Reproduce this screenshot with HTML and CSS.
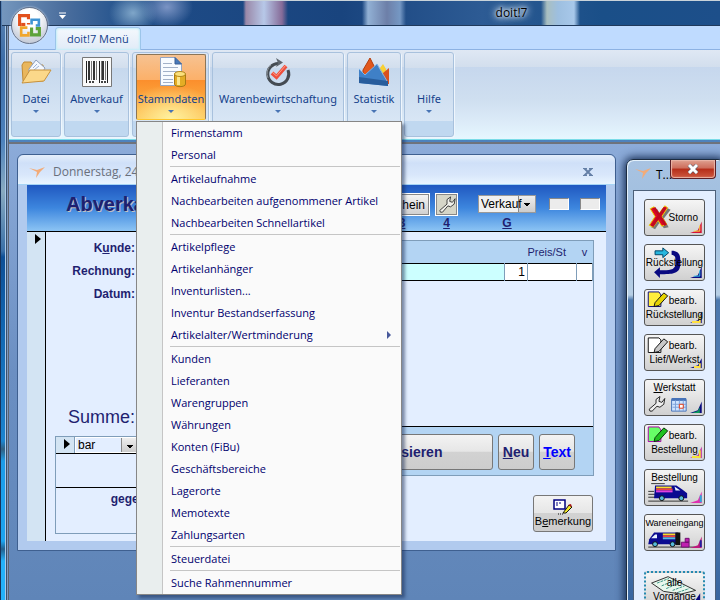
FILE: index.html
```html
<!DOCTYPE html>
<html lang="de">
<head>
    <meta charset="UTF-8">
    <meta name="viewport" content="width=device-width, initial-scale=1.0">
    <title>doit!7</title>
    <link rel="stylesheet" href="styles.css">
</head>
<body>

<div class="app">
    <header class="titlebar">
        <button class="orb" aria-label="Office">
            <svg viewBox="0 0 24 24" width="25" height="25" fill="none" stroke-width="3">
                <path d="M11 11V9.500M4 11H2.500V2.500H11V6" stroke="#e2501c"/>
                <path d="M4 11H8" stroke="#e2501c"/>
                <path d="M14 11V6.500H21V12H18" stroke="#3f94d4" stroke-width="2.500"/>
                <path d="M10 14H4V21.500H11V18" stroke="#f0a62c" stroke-width="2.500"/>
                <path d="M14 14V21H21.500V15H18" stroke="#5da33a" stroke-width="3"/>
            </svg>
        </button>
        <button class="quick" aria-label="Schnellzugriff">
            <svg viewBox="0 0 7 7" width="7" height="7"><path d="M0 1H7" stroke="#fff"/><path d="M0 3H7L3.500 7Z" fill="#fff"/></svg>
        </button>
        <h1>doit!7</h1>
    </header>

    <div class="tabs">
        <button class="tab">doit!7 Menü</button>
    </div>

    <nav class="ribbon">
        <div class="group">
            <button class="big">
                <svg viewBox="0 0 32 32" width="32" height="32">
                    <path d="M2 9L4 6H11L13 9H23V25H3Z" fill="#e9b65c" stroke="#c08a35"/>
                    <path d="M9 13L16 4L25 12L20 21H9Z" fill="#f4f8ff" stroke="#8e9fba"/>
                    <path d="M13 12L17 8M14 14L19 10" stroke="#9fb3d3"/>
                    <path d="M2 27L10 14H31L24 25Z" fill="#fbd88a" stroke="#c8923c"/>
                </svg>
                <span>Datei</span><i></i>
            </button>
        </div>
        <div class="group">
            <button class="big">
                <svg viewBox="0 0 32 32" width="32" height="32">
                    <path d="M1.500 1.500H30.500V30.500H1.500Z" fill="#fafafa" stroke="#777"/>
                    <path d="M5.500 5V27M18.500 5V27M26.500 5V27" stroke="#222" stroke-width="1"/>
                    <path d="M8 5V24M13 5V24M22 5V24" stroke="#333" stroke-width="2"/>
                    <path d="M10.500 5V24M15.500 5V24M20.500 5V24M24.500 5V24" stroke="#777"/>
                    <path d="M8 26H13M20 26H25" stroke="#444" stroke-width="2" stroke-dasharray="2 1"/>
                </svg>
                <span>Abverkauf</span><i></i>
            </button>
        </div>
        <div class="group">
            <button class="big open" aria-expanded="true">
                <svg viewBox="0 0 32 32" width="32" height="32">
                    <path d="M5.500 1.500H20L26.500 8V29.500H5.500Z" fill="#f8fbff" stroke="#94a6c4"/>
                    <path d="M20 1.500V8H26.500Z" fill="#4779bb" stroke="#3b5f93"/>
                    <path d="M8 7.500H17M8 11.500H23M8 15.500H23M8 19.500H18M8 23.500H18M8 26.500H18" stroke="#a3b1c8"/>
                    <path d="M19.500 18V28C19.500 31.500 30.500 31.500 30.500 28V18Z" fill="#e4ad25" stroke="#a87a14"/>
                    <path d="M22 20V29H25V20Z" fill="#fbe58b"/>
                    <ellipse cx="25" cy="18" rx="5.500" ry="2.500" fill="#fbe07b" stroke="#b4871c"/>
                </svg>
                <span>Stammdaten</span><i></i>
            </button>
            <div class="menu" role="menu">
                <button>Firmenstamm</button>
                <button>Personal</button>
                <hr>
                <button>Artikelaufnahme</button>
                <button>Nachbearbeiten aufgenommener Artikel</button>
                <button>Nachbearbeiten Schnellartikel</button>
                <hr>
                <button>Artikelpflege</button>
                <button>Artikelanhänger</button>
                <button>Inventurlisten...</button>
                <button>Inventur Bestandserfassung</button>
                <button class="sub">Artikelalter/Wertminderung</button>
                <hr>
                <button>Kunden</button>
                <button>Lieferanten</button>
                <button>Warengruppen</button>
                <button>Währungen</button>
                <button>Konten (FiBu)</button>
                <button>Geschäftsbereiche</button>
                <button>Lagerorte</button>
                <button>Memotexte</button>
                <button>Zahlungsarten</button>
                <hr>
                <button>Steuerdatei</button>
                <hr>
                <button>Suche Rahmennummer</button>
            </div>
        </div>
        <div class="group">
            <button class="big">
                <svg viewBox="0 0 32 32" width="32" height="32" fill="none">
                    <path d="M17 7.500A10.500 10.500 0 1 0 26 14" stroke="#444b52" stroke-width="3"/>
                    <path d="M9 9A11 11 0 0 0 6 22" stroke="#8b9299" stroke-width="1"/>
                    <path d="M14 2L21 6.500L14 11L16 7Z" fill="#5d656d"/>
                    <path d="M10 17L14.500 21L24 10" stroke="#ee4f3e" stroke-width="4"/>
                    <path d="M10 16L14.500 20L24 9" stroke="#ff9c86" stroke-width="1"/>
                </svg>
                <span>Warenbewirtschaftung</span><i></i>
            </button>
        </div>
        <div class="group">
            <button class="big">
                <svg viewBox="0 0 32 32" width="32" height="32">
                    <path d="M5 14L12 2L18 14V23H5Z" fill="#e2581d" stroke="#b23d0d"/>
                    <path d="M22 12L25 8L28 13V24H22Z" fill="#f8d034"/>
                    <path d="M25 17L31 12V28H25Z" fill="#d9521e"/>
                    <path d="M1 13L7 19L19 8L30 28V30L1 27Z" fill="#3f80c7"/>
                    <path d="M1 21L30 25V30L1 27Z" fill="#285d9c"/>
                    <path d="M1 13L7 19L19 8L29 25" fill="none" stroke="#7db4ea"/>
                </svg>
                <span>Statistik</span><i></i>
            </button>
        </div>
        <div class="group">
            <button class="big"><span>Hilfe</span><i></i></button>
        </div>
    </nav>

    <main class="workspace">
        <section class="sale">
            <div class="sale-title">
                <svg class="bird" viewBox="0 0 16 12" width="16" height="12"><path d="M0 2L8 4L16 1L11 6L7 12L8 6Z" fill="#f2ab78"/></svg>
                <h2>Donnerstag, 24.</h2>
                <button class="shut" aria-label="Schließen">
                    <svg viewBox="0 0 10 8" width="10" height="8"><path d="M1 0L9 8M9 0L1 8" stroke="#647fa6" stroke-width="2"/><path d="M0 0H4M6 0H10M0 8H4M6 8H10" stroke="#647fa6" stroke-width="2"/></svg>
                </button>
            </div>
            <div class="sale-body">
                <div class="band">
                    <h3>Abverkauf</h3>
                    <div class="key">
                        <button class="note">Schein</button>
                        <u>3</u>
                    </div>
                    <div class="key">
                        <button class="wrench" aria-label="Werkstatt">
                            <svg viewBox="0 0 20 20" width="18" height="18"><path d="M2 16L10 9V4L14 1L13 6L16 7L19 3L18 9L14 12L11 11L5 18Q2 19 2 16Z" fill="#f0f0ea" stroke="#333"/></svg>
                        </button>
                        <u>4</u>
                    </div>
                    <div class="key kind">
                        <select aria-label="Art"><option>Verkauf</option></select>
                        <u>G</u>
                    </div>
                    <input class="tiny" aria-label="Feld 1">
                    <input class="tiny" aria-label="Feld 2">
                </div>
                <div class="record">
                    <div class="selector"></div>
                    <div class="customer">
                        <p>K<u>u</u>nde:</p>
                        <p>Rechnung:</p>
                        <p>Datum:</p>
                        <p class="sum">Summe:</p>
                        <div class="payment">
                            <div class="pay-row">
                                <span class="pointer"></span>
                                <select aria-label="Zahlungsart"><option>bar</option></select>
                            </div>
                            <div class="pay-blank"></div>
                            <p>gegeben:</p>
                        </div>
                    </div>
                    <div class="items">
                        <div class="list">
                            <table>
                                <thead>
                                    <tr><th></th><th></th><th class="price">Preis/St</th><th>v</th></tr>
                                </thead>
                                <tbody>
                                    <tr><td class="article"></td><td class="count">1</td><td></td><td></td></tr>
                                </tbody>
                            </table>
                            <div class="list-space"></div>
                            <div class="actions">
                                <button class="cash">Kassieren</button>
                                <button><u>N</u>eu</button>
                                <button class="text"><u>T</u>ext</button>
                            </div>
                        </div>
                        <button class="remark">
                            <svg viewBox="0 0 20 16" width="20" height="16">
                                <path d="M1 1H12V10H1Z" fill="#fff" stroke="#000080" stroke-width="1.500"/>
                                <path d="M3 4H5M6 4H8M3 6H5" stroke="#000080"/>
                                <path d="M10 14L16 6L19 8L13 14Z" fill="#f5e928" stroke="#111"/>
                                <path d="M15 6L18 5L19 8Z" fill="#a11"/>
                                <path d="M5 15H11" stroke="#111" stroke-dasharray="1 1"/>
                            </svg>
                            <span>B<u>e</u>merkung</span>
                        </button>
                    </div>
                </div>
            </div>
        </section>

        <aside class="tools">
            <div class="tools-title">
                <svg class="bird" viewBox="0 0 16 12" width="16" height="12"><path d="M0 2L8 4L16 1L11 6L7 12L8 6Z" fill="#f2ab78"/></svg>
                <h2>T...</h2>
                <button class="close" aria-label="Schließen">
                    <svg viewBox="0 0 12 10" width="12" height="10"><path d="M2 1L10 9M10 1L2 9" stroke="#54596b" stroke-width="4"/><path d="M2 1L10 9M10 1L2 9" stroke="#fff" stroke-width="3"/></svg>
                </button>
            </div>
            <div class="tools-body">
                <button class="tool right">
                    <svg viewBox="0 0 60 36"><path d="M6 9L10 7L14 14L20 6L24 8L17 17L22 26L17 27L13 21L8 28L4 26L10 17Z" fill="#777" transform="translate(2 2)"/><path d="M5 9L9 7L14 14L20 6L23 8L17 17L22 25L17 27L13 21L8 28L4 26L10 17Z" fill="#e00a24" stroke="#e8d800"/><path d="M9 8L21 26M20 8L7 27" stroke="#c00820" stroke-width="3"/><path d="M58 22V34H46L54 31Z" fill="#d4123a"/><path d="M56 26V32H50" fill="none" stroke="#ffe040"/></svg>
                    <span>Storno</span>
                </button>
                <button class="tool">
                    <svg viewBox="0 0 60 36"><path d="M10 6H18V3L24 8L18 13V10H10Z" fill="#27b7de" stroke="#046"/><path d="M27 6C37 6 36 14 36 19C36 30 28 30 15 30V34L9 28L15 23V26C25 26 30 26 31 20C31 14 32 11 27 10Z" fill="#0a0a80"/><path d="M58 22V34H46L54 31Z" fill="#0a0a80"/><path d="M56 26V32H50" fill="none" stroke="#38d0f0"/></svg>
                    <span>Rückstellung</span>
                </button>
                <button class="tool pair">
                    <svg viewBox="0 0 60 36"><path d="M3 2H14L16 5V17H3Z" fill="#ffee3c" stroke="#0a0a80"/><path d="M10 13L19 3L23 6L14 16L9 17Z" fill="#e6d400" stroke="#111"/><path d="M58 22V34H46L54 31Z" fill="#0a0a80"/><path d="M56 26V33H48" fill="none" stroke="#ffe040" stroke-width="2"/></svg>
                    <span>bearb.</span><span>Rückstellung</span>
                </button>
                <button class="tool pair">
                    <svg viewBox="0 0 60 36"><path d="M3 3H14L16 5V18H3Z" fill="#fff" stroke="#111"/><path d="M10 14L19 4L23 7L14 17L9 18Z" fill="#c8c8c8" stroke="#111"/><path d="M58 24V34H46L54 31Z" fill="#0a0a80"/><path d="M56 29V33H50" fill="none" stroke="#ffe040" stroke-width="2"/></svg>
                    <span>bearb.</span><span>Lief/Werkst</span>
                </button>
                <button class="tool top">
                    <svg viewBox="0 0 60 36"><path d="M4 30L11 24V20L15 17L14 22L17 23L20 19L19 25L15 28L12 27L7 32Q4 33 4 30Z" fill="#eee" stroke="#222"/><path d="M27 20H42V32H27Z" fill="#cfe4ff" stroke="#4773b8"/><path d="M27 20H42" stroke="#4773b8" stroke-width="3"/><path d="M28 25H42M28 28H42M31 21V32M35 21V32M39 21V32" stroke="#7da1d9"/><path d="M35 25H39V29H35Z" fill="#fff" stroke="#e23a16"/><path d="M58 22V34H46L54 31Z" fill="#0a0a80"/><path d="M56 28V34H48L54 32Z" fill="#0a9a5a"/></svg>
                    <span><u>W</u>erkstatt</span>
                </button>
                <button class="tool pair">
                    <svg viewBox="0 0 60 36"><path d="M3 2H14L16 5V17H3Z" fill="#6f6" stroke="#a0a"/><path d="M10 13L19 3L23 6L14 16L9 17Z" fill="#1fc11f" stroke="#053005"/><path d="M58 22V34H46L54 31Z" fill="#c018a0"/><path d="M56 26V33H48" fill="none" stroke="#f3e534" stroke-width="2"/></svg>
                    <span>bearb.</span><span>Bestellung</span>
                </button>
                <button class="tool top">
                    <svg viewBox="0 0 60 36"><path d="M3 32H44M3 25H12M3 28H10M6 14H20M3 22H9" stroke="#333"/><path d="M10 16H32L38 20L43 24V29H9Z" fill="#0a0a90"/><path d="M30 17L36 21H31Z" fill="#e8f2ff"/><path d="M11 18H27" stroke="#f8de2c" stroke-width="2"/><path d="M11 20H28" stroke="#f04040" stroke-width="2"/><path d="M11 22H28" stroke="#e040e0" stroke-width="2"/><circle cx="17" cy="29" r="2.500" fill="#5bd" stroke="#111"/><circle cx="37" cy="29" r="2.500" fill="#5bd" stroke="#111"/><path d="M58 22V34H46L54 31Z" fill="#e030b0"/><path d="M57 26V33" stroke="#2aa9dc" stroke-width="2"/></svg>
                    <span>Bestellung</span>
                </button>
                <button class="tool top long">
                    <svg viewBox="0 0 60 36"><path d="M3 33H56" stroke="#333"/><path d="M4 25L9 18H34V30H3Z" fill="#0a0a90"/><path d="M6 24L10 20H12V24Z" fill="#e8f2ff"/><path d="M18 20H31" stroke="#f8de2c" stroke-width="2"/><path d="M18 22H31" stroke="#f04040" stroke-width="2"/><path d="M18 24H31" stroke="#5bd" stroke-width="2"/><path d="M31 18H36V31H31Z" fill="#111"/><circle cx="10" cy="30" r="2.500" fill="#5bd" stroke="#111"/><circle cx="28" cy="30" r="2.500" fill="#5bd" stroke="#111"/><path d="M37 28H45V33H37ZM41 24H45V28H41Z" fill="#c020b0" stroke="#701070"/><path d="M58 22V34H46L54 31Z" fill="#c0187c"/><path d="M57 26V33" stroke="#2020a0" stroke-width="2"/></svg>
                    <span>Wareneingang</span>
                </button>
                <button class="tool all">
                    <svg viewBox="0 0 60 36"><path d="M5 11L23 4L53 19L37 23L18 20Z" fill="#e8f7ed" stroke="#222"/><path d="M11 11L24 6M16 14L30 8M21 17L35 11M28 19L41 14M34 21L46 17" stroke="#2b8b7a" stroke-dasharray="3 1"/><path d="M58 22V34H50Z" fill="#0a0a80"/></svg>
                    <span>alle</span><span>Vorgänge</span>
                </button>
            </div>
        </aside>
    </main>
</div>

</body>
</html>
```

FILE: styles.css
```css
* {
    box-sizing: border-box;
}
body {
    margin: 0;
    height: 100vh;
    overflow: hidden;
    font-family: "Liberation Sans", Arial, sans-serif;
    font-size: 12px;
    color: #1f1f70;
}
h1, h2, h3, p {
    margin: 0;
}
button, select, input {
    font: inherit;
    color: inherit;
    margin: 0;
    padding: 0;
}
button {
    border: none;
    background: none;
}

/* main window */
.app {
    display: flex;
    flex-direction: column;
    height: 100%;
    padding-left: 9px;
    border-top: 1px solid #c9d3da;
    background:
        linear-gradient(90deg, #16335c 1px, transparent 1px 5px, #a9c8e8 5px 6px, #38506c 6px 7px, #7f98bd 7px 8px, #5d6470 8px 9px, transparent 9px),
        linear-gradient(#5d84b2, #3d6ea8 60px, #4d82bd 140px, #88aac0 190px, #3a70a8 250px, #0d4f96 256px, #1167b2 330px, #1c84cf 440px, #315f80 448px, #1c9ce8 460px, #1ca4f0 540px, #235f8c 548px, #23b1fa 560px);
}
.titlebar {
    display: flex;
    justify-content: center;
    align-items: center;
    position: relative;
    height: 25px;
    margin-left: -7px;
    padding-left: 301px;
    border-bottom: 1px solid #203a5c;
    background:
        radial-gradient(ellipse 26px 20px at 165px 6px, #7b94c4, transparent),
        radial-gradient(ellipse 24px 20px at 131px 12px, #7fa6c9, transparent),
        linear-gradient(90deg, transparent 241px, #9a88a8 244px, #b7c8e8 262px, #866b98 280px, transparent 286px),
        linear-gradient(90deg, transparent 360px, #92b1d5 366px, #6d7fa8 385px, #7598c4 398px, transparent 404px),
        linear-gradient(90deg, transparent 539px, #a9bfc0 545px, #9dbfe0 556px, #a8c8ea 572px, transparent 578px),
        linear-gradient(90deg, #7496bd, #4c6f9e 60px, #2b5890 110px, #1d4a85 180px, #19447e 340px, #2d5b94 480px, #1a4f88 600px, #1d4f8a);
}
.titlebar h1 {
    padding: 0 6px;
    font: 12px/16px "Open Sans", sans-serif;
    color: #000;
    text-shadow: 0 0 3px #cde, 0 0 6px #fff, 0 0 8px #cde, 0 0 10px #cde;
}
.orb {
    display: flex;
    align-items: center;
    justify-content: center;
    position: absolute;
    left: 9px;
    top: 6px;
    z-index: 3;
    width: 37px;
    height: 37px;
    border: 1px solid #66738a;
    border-radius: 50%;
    background: radial-gradient(circle at 50% 30%, #fff 30%, #d3d8e2 65%, #b5bccb);
    box-shadow: 0 0 2px #dfe8f4;
}
.quick {
    position: absolute;
    left: 57px;
    top: 11px;
    display: flex;
}
.tabs {
    height: 24px;
    padding: 1px 0 0 46px;
    background: #bfdbff;
    border-bottom: 1px solid #8db2e3;
}
.tab {
    height: 23px;
    padding: 0 11px;
    border: 1px solid #9cc5ea;
    border-bottom: none;
    border-radius: 4px 4px 0 0;
    background: linear-gradient(#f4f8fd, #e1ebf7);
    box-shadow: inset 0 0 2px 1px #c3eef8;
    font: 11px/20px "Open Sans", sans-serif;
    color: #15428b;
}

/* ribbon */
.ribbon {
    display: grid;
    grid-template-columns: 50px 65px 77px 132px 54px 50px;
    gap: 3px;
    height: 90px;
    padding: 2px;
    border-bottom: 1px solid #7bdce8;
    background: linear-gradient(#dfe8f4, #d2deed 17px, #c6d7ed 17px, #cfdff0 50px, #dcebf8 72px, #e6f7ff);
    font: 11px/14px "Noto Sans", sans-serif;
}
.group {
    position: relative;
    height: 85px;
    border: 1px solid #a8c1dd;
    border-radius: 3px;
    background: linear-gradient(#dfe8f4, #d2deed 15px, #c6d8ed 15px, #d8e6f5 68px, #c0d8f0 68px);
    box-shadow: 1px 1px 0 #eff6fd;
}
.big {
    display: flex;
    flex-direction: column;
    align-items: center;
    justify-content: flex-end;
    width: 100%;
    height: 67px;
    padding-bottom: 7px;
    white-space: nowrap;
    color: #15428b;
}
.big svg {
    margin-bottom: 4px;
}
.big i {
    margin-top: 4px;
    border: 3px solid transparent;
    border-top-color: #4874b4;
    border-bottom: none;
}
.big.open {
    width: 70px;
    height: 66px;
    margin: 1px 0 0 3px;
    padding-bottom: 6px;
    border: 1px solid #8c7556;
    border-bottom-color: #ffc62a;
    border-radius: 2px;
    background: radial-gradient(ellipse 50px 34px at 50% 100%, #fff2a0, transparent), linear-gradient(#f6c291, #fcb069 25px, #fb8e2c 25px, #fdc04f);
}
.menu {
    position: absolute;
    left: 3px;
    top: 68px;
    z-index: 5;
    width: 266px;
    padding-left: 26px;
    border: 1px solid #868686;
    background: linear-gradient(90deg, #e9eeee 25px, #c5c5c5 25px 26px, #fafafa 26px);
    box-shadow: 3px 3px 3px rgba(20, 40, 80, 0.5);
    font-family: "Open Sans", sans-serif;
}
.menu button {
    display: block;
    width: 100%;
    height: 22px;
    padding-left: 8px;
    text-align: left;
    color: #00006e;
}
.menu hr {
    height: 1px;
    margin: 0 1px 1px 7px;
    border: none;
    background: #c5c5c5;
}
.menu .sub {
    display: flex;
    align-items: center;
    justify-content: space-between;
    padding-right: 10px;
}
.sub::after {
    content: "";
    border: 4px solid transparent;
    border-left-color: #47589a;
    border-right: none;
}

/* workspace */
.workspace {
    position: relative;
    flex: 1;
    overflow: hidden;
    margin-top: 2px;
    border-top: 2px solid #6e737c;
    background: linear-gradient(#8cabd9, #6b8fc2 50%, #5f85b8);
}
.sale {
    position: absolute;
    left: 8px;
    right: 104px;
    top: 10px;
    padding: 0 9px 9px;
    border: 1px solid #3f6090;
    border-radius: 6px 6px 0 0;
    background: #b1caee;
}
.sale-title {
    display: flex;
    align-items: center;
    gap: 8px;
    height: 30px;
    margin: 0 -9px;
    padding: 4px 22px 0 11px;
    border-radius: 6px 6px 0 0;
    border-bottom: 1px solid #a5d4f5;
    background: linear-gradient(#e5eefb, #cfe0f8 8px, #d9e7fb 20px, #e9f5ff);
}
.sale-title h2 {
    flex: 1;
    font: 12px/16px "Open Sans", sans-serif;
    color: #69707c;
}
.shut {
    display: flex;
}
.sale-body {
    background: #e3eeff;
}
.band {
    display: flex;
    gap: 5px;
    height: 47px;
    padding: 8px 6px 0 39px;
    border-bottom: 1px solid #000;
    background: linear-gradient(#2058c0, #3d86de 50%, #8cc4f4);
}
.band h3 {
    flex: 1;
    font-size: 20px;
    font-weight: bold;
    line-height: 23px;
    text-shadow: 1px 1px 0 #c0c0c0;
}
.key {
    display: flex;
    flex-direction: column;
    align-items: center;
    font-weight: bold;
}
.key button {
    height: 23px;
    border: 1px solid #fff;
    outline: 1px solid #888;
    outline-offset: -2px;
    background: linear-gradient(#f5f5f5, #cfcfcf);
    font-weight: normal;
    color: #000;
}
.key .note {
    width: 56px;
    padding-right: 4px;
    text-align: right;
}
.key .wrench {
    width: 23px;
    padding: 2px;
    background: #d6d6c8;
}
.key u {
    line-height: 14px;
}
.kind {
    margin: 0 2px 0 15px;
}
select {
    appearance: none;
    height: 16px;
    padding-left: 2px;
    border: 1px solid #fff;
    border-radius: 0;
    font-weight: normal;
    color: #000;
    background:
        linear-gradient(135deg, #000 50%, transparent 50%) right 4px top 7px / 4px 4px no-repeat,
        linear-gradient(225deg, #000 50%, transparent 50%) right 8px top 7px / 4px 4px no-repeat,
        linear-gradient(#888, #888) right 16px top / 1px 100% no-repeat,
        linear-gradient(#eee, #ccc) right / 16px 100% no-repeat,
        #f0f0f0;
}
.kind select {
    width: 58px;
    height: 18px;
    margin: 2px 0 3px;
    border-color: #999;
}
.tiny {
    width: 20px;
    height: 12px;
    margin: 5px 0 0 6px;
    border: 1px solid #fff;
    border-top-color: #888;
    border-left-color: #888;
    background: #ececec;
}
.record {
    display: grid;
    grid-template-columns: 19px 160px 1fr;
}
.selector {
    border-right: 1px solid #000;
    background: #d3e4f3;
}
.selector::before, .pointer::before {
    content: "";
    display: block;
    margin: 2px 0 0 8px;
    border: 5px solid transparent;
    border-left: 6px solid #000;
    border-right: none;
}
.customer {
    padding: 5px 0 7px 9px;
    font-weight: bold;
}
.customer p {
    width: 80px;
    height: 23px;
    line-height: 23px;
    text-align: right;
}
.customer .sum {
    height: 30px;
    margin: 96px 0 4px;
    font-size: 18px;
    font-weight: normal;
    line-height: 30px;
}
.payment {
    height: 98px;
    border: 1px solid #7f9db9;
}
.pay-row {
    display: flex;
    border-bottom: 1px solid #000;
}
.pointer {
    width: 19px;
    border-right: 1px solid #7f9db9;
    background: #d3e4f3;
}
.pay-row select {
    width: 64px;
    background-color: #e3eeff;
}
.pay-blank {
    height: 34px;
    border-bottom: 1px solid #000;
}
.customer .payment p {
    width: 108px;
}
.items {
    padding: 8px 12px 8px 0;
}
.list {
    border: 1px solid #7f9db9;
}
table {
    width: 100%;
    table-layout: fixed;
    border-collapse: collapse;
}
th {
    height: 22px;
    padding: 0;
    background: #b3d4f3;
    font-size: 11px;
    font-weight: normal;
}
tbody tr {
    height: 17px;
    border-top: 1px solid #000;
    border-bottom: 1px solid #000;
}
td {
    padding: 0 2px;
    background: #fff;
    border-right: 1px solid #7f9db9;
    line-height: 14px;
    color: #000;
}
td.article {
    background: #ccffff;
}
td.count {
    text-align: right;
}
th:nth-child(2) {
    width: 23px;
}
th.price {
    width: 49px;
    text-align: left;
}
th:nth-child(4) {
    width: 16px;
}
.list-space {
    height: 146px;
    border-bottom: 1px solid #000;
}
.actions {
    display: flex;
    gap: 5px;
    padding: 7px 18px 5px 0;
    background: #b3d4f3;
}
.actions button, .remark {
    width: 36px;
    height: 36px;
    border: 1px solid #777;
    border-radius: 3px;
    background: linear-gradient(#f3f3f3, #e6e6e6 48%, #d2d2d2 50%, #cdcdcd);
    font-size: 14px;
    font-weight: bold;
}
.actions .cash {
    width: 168px;
    margin-left: auto;
}
.actions .text {
    color: #00f;
}
.remark {
    display: flex;
    flex-direction: column;
    align-items: center;
    width: 60px;
    height: 37px;
    margin: 19px 1px 0 auto;
    padding-top: 3px;
    font-size: 11px;
    font-weight: normal;
    color: #000;
}

/* tool window */
.tools {
    position: absolute;
    right: -5px;
    top: 15px;
    padding: 0 8px 8px 6px;
    border: 1px solid #1c2c40;
    border-radius: 7px 7px 0 0;
    background: linear-gradient(#a8c3e2, #9fbede 60px, #b7cfe6 135px, #4c78ae 140px, #5580b4 300px, #33619c);
    box-shadow: 0 0 9px 2px #172e55, inset 1px 1px 0 #e4f1fb;
}
.tools-title {
    display: flex;
    height: 30px;
    padding: 7px 0 0 2px;
}
.tools-title h2 {
    width: 14px;
    margin-left: 5px;
    font: 12px/16px "Open Sans", sans-serif;
    color: #000;
}
.close {
    display: flex;
    align-items: center;
    justify-content: center;
    width: 46px;
    height: 19px;
    margin-top: -7px;
    border: 1px solid #5b2027;
    border-top: none;
    border-radius: 0 0 4px 4px;
    background: linear-gradient(#dfa090, #cd6d5b 45%, #b52d19 50%, #ce5a41);
    box-shadow: inset 0 0 1px 1px #eab6a8;
}
.tools-body {
    display: flex;
    flex-direction: column;
    gap: 8px;
    padding: 8px 10px;
    border: 1px solid #4d6079;
    background: #e3eeff;
}
.tool {
    display: flex;
    flex-direction: column;
    align-items: center;
    justify-content: center;
    position: relative;
    width: 61px;
    height: 37px;
    border: 1px solid #555;
    border-radius: 3px;
    background: linear-gradient(#f5f5f5, #e4e4e4 48%, #d0d0d0);
    font-size: 10px;
    line-height: 14px;
    white-space: nowrap;
    color: #000;
}
.tool svg {
    position: absolute;
    left: 0;
    top: 0;
    width: 100%;
    height: 100%;
}
.tool span {
    position: relative;
}
.tool.right {
    align-items: flex-end;
    padding-right: 6px;
}
.tool.top {
    justify-content: flex-start;
    padding-top: 1px;
}
.tool.long {
    font-size: 9px;
}
.tool.pair span:first-of-type {
    align-self: flex-end;
    padding-right: 7px;
}
.tool.all {
    margin-top: 12px;
    border: 2px dotted #2489b0;
}
```
